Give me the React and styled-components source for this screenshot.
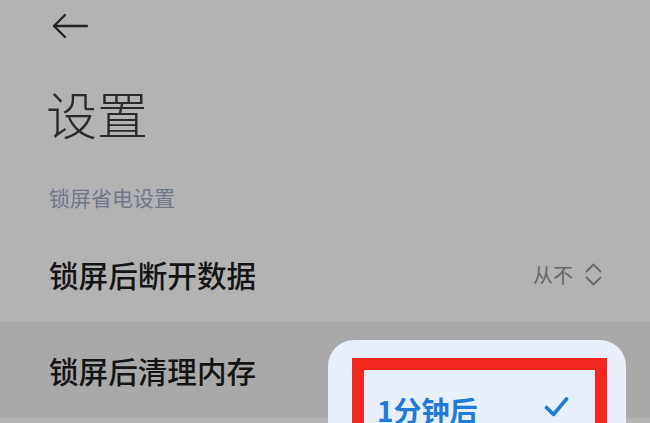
import React from 'react';
import styled, {createGlobalStyle} from 'styled-components';

const Global = createGlobalStyle`
    html, body {
        margin: 0;
        padding: 0;
        background: #b3b3b3;
        overflow: hidden;
    }
    body {
        font-family: 'Noto Sans CJK SC', 'Noto Sans', sans-serif;
    }
`;

const Screen = styled.div`
    width: 650px;
    height: 423px;
    background: #b3b3b3;
    display: flex;
    flex-direction: column;
    overflow: hidden;
`;

const TopBar = styled.div`
    height: 52px;
    display: flex;
    align-items: center;
    padding-left: 52px;
`;

const Title = styled.h1`
    margin: 36px 0 0 46px;
    font-size: 51px;
    line-height: 51px;
    font-weight: 300;
    color: #2a2a2a;
`;

const SectionLabel = styled.div`
    margin: 48px 0 0 49px;
    font-size: 21px;
    line-height: 21px;
    color: #70778a;
`;

const List = styled.div`
    position: relative;
    margin-top: 19px;
`;

const Row = styled.div`
    height: ${p => p.$h || 95}px;
    display: flex;
    align-items: center;
    justify-content: space-between;
    padding: 0 48px 0 49px;
    background: ${p => (p.$pressed ? '#a9a9a9' : '#b3b3b3')};
`;

const RowLabel = styled.span`
    font-size: 29.6px;
    font-weight: 500;
    color: #141414;
`;

const RowValue = styled.span`
    display: flex;
    align-items: center;
    gap: 12px;
    font-size: 20px;
    color: #686868;
`;

const Popup = styled.div`
    position: absolute;
    left: 328px;
    top: 113px;
    width: 298px;
    height: 140px;
    background: #e7f0fa;
    border-radius: 26px;
    padding: 18px 19px 0 24px;
    box-sizing: border-box;
`;

const Highlight = styled.div`
    border: 12px solid #f2281f;
    height: 120px;
    box-sizing: border-box;
    display: flex;
    align-items: flex-start;
    justify-content: space-between;
    padding: 20px 26px 0 13px;
`;

const Option = styled.span`
    font-size: 28px;
    line-height: 40px;
    font-weight: 700;
    color: #1f7bd6;
`;

const Back = () => (
    <svg width="36" height="26" viewBox="0 0 36 26" fill="none" stroke="#222" strokeWidth="2.3" strokeLinecap="round" strokeLinejoin="round">
        <path d="M2 13H35" />
        <path d="M13 2L2 13L13 24" />
    </svg>
);

const UpDown = () => (
    <svg width="17" height="23" viewBox="0 0 17 23" fill="none" stroke="#6a6a6a" strokeWidth="1.8" strokeLinecap="round" strokeLinejoin="round">
        <path d="M1.5 8.5L8.5 1.5L15.5 8.5" />
        <path d="M1.5 14.5L8.5 21.5L15.5 14.5" />
    </svg>
);

const Check = () => (
    <svg width="25" height="22" viewBox="0 0 25 22" fill="none" stroke="#1f7bd6" strokeWidth="3.6" strokeLinecap="round" strokeLinejoin="round" style={{marginTop: 6}}>
        <path d="M2.5 11.5L9.5 18.5L22.5 3" />
    </svg>
);

const App = () => {
    return (
        <>
            <Global />
            <Screen>
                <TopBar>
                    <Back />
                </TopBar>
                <Title>设置</Title>
                <SectionLabel>锁屏省电设置</SectionLabel>
                <List>
                    <Row>
                        <RowLabel>锁屏后断开数据</RowLabel>
                        <RowValue>
                            从不
                            <UpDown />
                        </RowValue>
                    </Row>
                    <Row $pressed $h={96}>
                        <RowLabel>锁屏后清理内存</RowLabel>
                    </Row>
                    <Popup>
                        <Highlight>
                            <Option>1分钟后</Option>
                            <Check />
                        </Highlight>
                    </Popup>
                </List>
            </Screen>
        </>
    );
};

export default App;
